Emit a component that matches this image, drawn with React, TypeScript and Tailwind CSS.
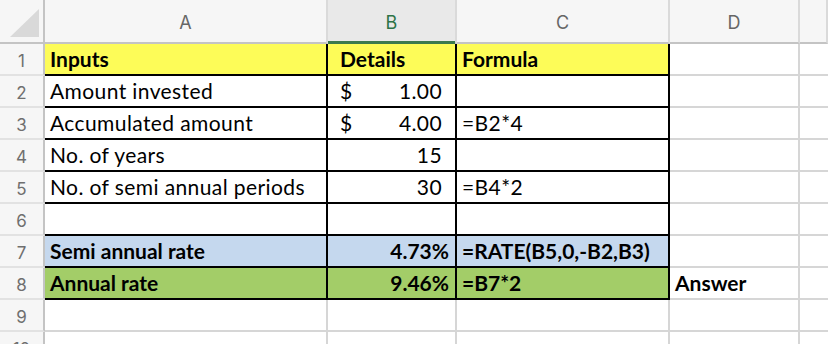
import React from 'react';

type Row = {
  n: number;
  a?: string;
  b?: string;
  cur?: boolean;
  c?: string;
  d?: string;
  bold?: boolean;
  fill?: string;
  boxed?: boolean;
};

const rows: Row[] = [
  { n: 1, a: 'Inputs', b: 'Details', c: 'Formula', bold: true, fill: 'bg-[#fdfc58]', boxed: true },
  { n: 2, a: 'Amount invested', b: '1.00', cur: true, boxed: true },
  { n: 3, a: 'Accumulated amount', b: '4.00', cur: true, c: '=B2*4', boxed: true },
  { n: 4, a: 'No. of years', b: '15', boxed: true },
  { n: 5, a: 'No. of semi annual periods', b: '30', c: '=B4*2', boxed: true },
  { n: 6, boxed: true },
  { n: 7, a: 'Semi annual rate', b: '4.73%', c: '=RATE(B5,0,-B2,B3)', bold: true, fill: 'bg-[#c5d8ee]', boxed: true },
  { n: 8, a: 'Annual rate', b: '9.46%', c: '=B7*2', d: 'Answer', bold: true, fill: 'bg-[#a3cd68]', boxed: true },
  { n: 9 },
  { n: 10 },
];

const headers = ['A', 'B', 'C', 'D', ''];

const App: React.FC = () => {
  return (
    <div className="w-[828px] h-[344px] overflow-hidden bg-white">
      <div className="grid grid-cols-[45px_283px_129px_213px_130px_1fr] grid-rows-[44px_repeat(10,32px)]">
        {/* Column headers */}
        <div className="bg-[#f6f6f6] border-b-2 border-r-2 border-[#c4c4c4] relative">
          <div className="absolute left-[10px] top-[9px] w-0 h-0 border-l-[29px] border-l-transparent border-b-[28px] border-b-[#d9d9d9]"></div>
        </div>
        {headers.map((h) => (
          <div
            key={h || 'E'}
            className={`relative flex items-center justify-center pt-[3px] border-b-2 border-r-2 border-r-[#dadada] font-['Inter','Liberation_Sans',sans-serif] text-[18px] ${
              h === 'B'
                ? 'bg-[#e9e9e9] border-b-[#c4c4c4] text-[#2e7447]'
                : 'bg-[#f6f6f6] border-b-[#c4c4c4] text-[#666666]'
            }`}
          >
            {h}
            {h === 'B' && <div className="absolute left-0 right-0 bottom-[-2px] h-[3px] bg-[#3a7a4e]"></div>}
          </div>
        ))}

        {/* Body */}
        {rows.map((r) => {
          const box = r.boxed ? 'border-r-black border-b-black' : 'border-r-[#d6d6d6] border-b-[#d6d6d6]';
          const txt = `font-['Lato','Carlito',sans-serif] text-[21px] text-black ${r.bold ? 'font-bold' : 'tracking-[0.4px]'}`;
          return (
            <React.Fragment key={r.n}>
              <div className="flex items-center justify-center bg-[#f6f6f6] border-r-2 border-r-[#c4c4c4] border-b-2 border-b-[#e2e2e2] font-['Inter','Liberation_Sans',sans-serif] text-[17px] text-[#6f6f6f] pt-[5px]">
                {r.n}
              </div>
              <div className={`flex items-end pl-[5px] border-r-2 border-b-2 whitespace-nowrap ${box} ${r.fill ?? ''} ${txt}`}>
                {r.a}
              </div>
              <div
                className={`flex items-end border-r-2 border-b-2 whitespace-nowrap ${box} ${r.fill ?? ''} ${txt} ${
                  r.n === 1 ? 'pl-[12px]' : r.cur ? 'justify-between pl-[12px] pr-[13px]' : r.bold ? 'justify-end pr-[6px]' : 'justify-end pr-[13px]'
                }`}
              >
                {r.cur && <span>$</span>}
                <span>{r.b}</span>
              </div>
              <div className={`flex items-end pl-[5px] border-r-2 border-b-2 whitespace-nowrap ${box} ${r.fill ?? ''} ${txt}`}>
                {r.c}
              </div>
              <div className={`flex items-end pl-[5px] border-r-2 border-b-2 border-r-[#d6d6d6] border-b-[#d6d6d6] whitespace-nowrap ${txt}`}>
                {r.d}
              </div>
              <div className="border-b-2 border-b-[#d6d6d6]"></div>
            </React.Fragment>
          );
        })}
      </div>
    </div>
  );
};

export default App;
